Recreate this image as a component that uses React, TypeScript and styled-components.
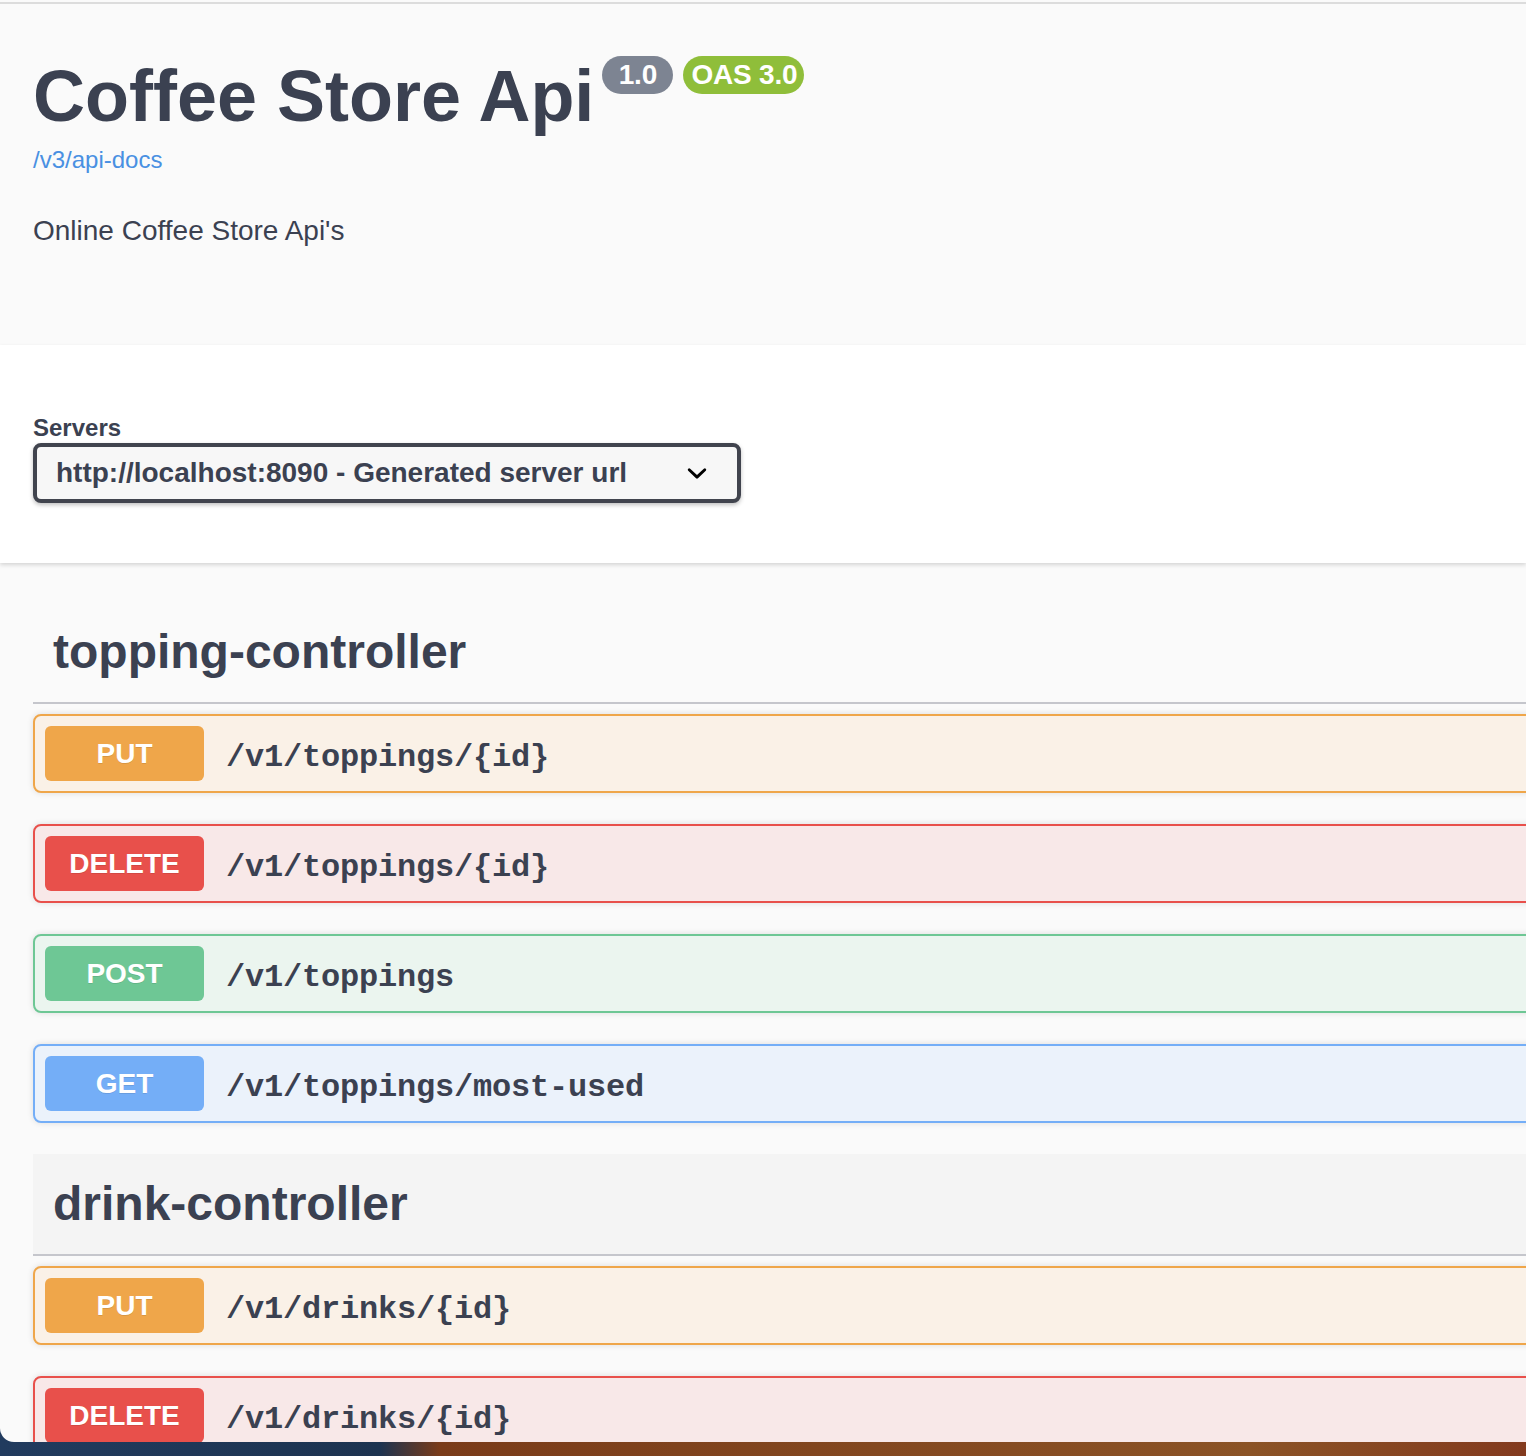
import React from "react";
import styled, { createGlobalStyle } from "styled-components";

const GlobalStyle = createGlobalStyle`
    html, body {
        margin: 0;
        padding: 0;
    }

    body {
        width: 1526px;
        height: 1456px;
        overflow: hidden;
        font-family: "Liberation Sans", Arial, sans-serif;
        color: #3b4151;
        background: linear-gradient(
            to right,
            #213b5e 0px,
            #1d3350 380px,
            #7a3b19 440px,
            #8b5326 1250px,
            #833a1e 1526px
        );
    }
`;

const Window = styled.div`
    height: 1442px;
    overflow: hidden;
    background: #fafafa;
    border-bottom-left-radius: 14px;
    padding-top: 2px;
    box-sizing: border-box;
`;

const TopRule = styled.div`
    height: 2px;
    background: #dcdcdc;
`;

const Wrapper = styled.div`
    width: 1640px;
    padding-left: 33px;
    box-sizing: border-box;
`;

const InfoSection = styled.section`
    padding: 52px 0 100px;
`;

const TitleRow = styled.div`
    display: flex;
    align-items: flex-start;
`;

const Title = styled.h1`
    margin: 4px 8px 0 0;
    font-size: 72px;
    line-height: 72px;
    font-weight: bold;
    color: #3b4151;
`;

const Badge = styled.span<{ $bg: string; $width?: number }>`
    display: inline-flex;
    align-items: center;
    justify-content: center;
    height: 38px;
    width: ${(p) => (p.$width ? `${p.$width}px` : "auto")};
    padding: ${(p) => (p.$width ? "0" : "0 7px 0 8px")};
    margin-right: 10px;
    border-radius: 19px;
    background: ${(p) => p.$bg};
    color: #ffffff;
    font-size: 28px;
    font-weight: bold;
    letter-spacing: -0.2px;
    box-sizing: border-box;
`;

const DocsLink = styled.a`
    display: block;
    margin-top: 16px;
    font-size: 24px;
    line-height: 24px;
    color: #4990e2;
    text-decoration: none;
`;

const Description = styled.p`
    margin: 45px 0 0;
    font-size: 28px;
    line-height: 28px;
    color: #3b4151;
`;

const SchemeContainer = styled.section`
    background: #ffffff;
    box-shadow: 0 2px 4px 0 rgba(0, 0, 0, 0.15);
    padding: 71px 0 60px;
    position: relative;
`;

const SchemeInner = styled.div`
    padding-left: 33px;
`;

const ServersLabel = styled.div`
    font-size: 24px;
    line-height: 24px;
    font-weight: bold;
    color: #3b4151;
    margin-bottom: 3px;
`;

const ServerSelect = styled.div`
    display: flex;
    align-items: center;
    justify-content: space-between;
    width: 708px;
    height: 60px;
    box-sizing: border-box;
    border: 4px solid #41444e;
    border-radius: 8px;
    background: #f7f7f7;
    box-shadow: 0 2px 4px 0 rgba(0, 0, 0, 0.25);
    padding: 0 20px 0 19px;
    font-size: 28px;
    line-height: 28px;
    font-weight: bold;
    color: #3b4151;

    svg {
        width: 40px;
        height: 40px;
        flex-shrink: 0;
    }
`;

const TagSection = styled.section`
    margin-bottom: 0;
`;

const TagHeading = styled.h3<{ $hover?: boolean }>`
    margin: 0 0 10px;
    padding: 20px 40px 20px 20px;
    font-size: 48px;
    line-height: 60px;
    font-weight: bold;
    color: #3b4151;
    background: ${(p) => (p.$hover ? "#f4f4f4" : "transparent")};
    border-bottom: 2px solid #c5c6cc;
`;

const Sections = styled.div`
    padding-top: 39px;
`;

const methodColors: Record<string, { main: string; bg: string }> = {
    PUT: { main: "#efa64a", bg: "#faf1e7" },
    DELETE: { main: "#e8504b", bg: "#f8e8e8" },
    POST: { main: "#6ec795", bg: "#ebf5ef" },
    GET: { main: "#74aef7", bg: "#ebf2fb" },
};

const OpBlock = styled.div<{ $method: string }>`
    display: flex;
    align-items: center;
    gap: 22px;
    height: 79px;
    box-sizing: border-box;
    padding: 0 10px;
    margin-bottom: 31px;
    border: 2px solid ${(p) => methodColors[p.$method].main};
    border-radius: 8px;
    background: ${(p) => methodColors[p.$method].bg};
    box-shadow: 0 0 6px rgba(0, 0, 0, 0.12);
`;

const MethodBadge = styled.span<{ $method: string }>`
    display: flex;
    align-items: center;
    justify-content: center;
    width: 159px;
    height: 55px;
    border-radius: 6px;
    background: ${(p) => methodColors[p.$method].main};
    color: #ffffff;
    font-size: 28px;
    font-weight: bold;
    text-shadow: 0 1px 0 rgba(0, 0, 0, 0.1);
`;

const OpPath = styled.span`
    font-family: "Liberation Mono", "Courier New", monospace;
    font-size: 32px;
    font-weight: bold;
    color: #3b4151;
    padding-top: 7px;
    letter-spacing: -0.2px;
`;

const ChevronDown = () => (
    <svg viewBox="0 0 20 20">
        <path
            fill="#000"
            d="M13.418 7.859a.695.695 0 01.978 0 .68.68 0 010 .969l-3.908 3.83a.697.697 0 01-.979 0l-3.908-3.83a.68.68 0 010-.969.695.695 0 01.978 0L10 11l3.418-3.141z"
        />
    </svg>
);

interface Operation {
    method: string;
    path: string;
}

const tags: { name: string; hover?: boolean; ops: Operation[] }[] = [
    {
        name: "topping-controller",
        ops: [
            { method: "PUT", path: "/v1/toppings/{id}" },
            { method: "DELETE", path: "/v1/toppings/{id}" },
            { method: "POST", path: "/v1/toppings" },
            { method: "GET", path: "/v1/toppings/most-used" },
        ],
    },
    {
        name: "drink-controller",
        hover: true,
        ops: [
            { method: "PUT", path: "/v1/drinks/{id}" },
            { method: "DELETE", path: "/v1/drinks/{id}" },
        ],
    },
];

const App = () => {
    return (
        <>
            <GlobalStyle />
            <Window>
                <TopRule />
                <Wrapper>
                    <InfoSection>
                        <TitleRow>
                            <Title>Coffee Store Api</Title>
                            <Badge $bg="#7d8492" $width={71}>
                                1.0
                            </Badge>
                            <Badge $bg="#8fbe3a">OAS 3.0</Badge>
                        </TitleRow>
                        <DocsLink href="#">/v3/api-docs</DocsLink>
                        <Description>Online Coffee Store Api's</Description>
                    </InfoSection>
                </Wrapper>
                <SchemeContainer>
                    <SchemeInner>
                        <ServersLabel>Servers</ServersLabel>
                        <ServerSelect>
                            <span>http://localhost:8090 - Generated server url</span>
                            <ChevronDown />
                        </ServerSelect>
                    </SchemeInner>
                </SchemeContainer>
                <Wrapper>
                    <Sections>
                        {tags.map((tag) => (
                            <TagSection key={tag.name}>
                                <TagHeading $hover={tag.hover}>{tag.name}</TagHeading>
                                {tag.ops.map((op, i) => (
                                    <OpBlock key={i} $method={op.method}>
                                        <MethodBadge $method={op.method}>
                                            {op.method}
                                        </MethodBadge>
                                        <OpPath>{op.path}</OpPath>
                                    </OpBlock>
                                ))}
                            </TagSection>
                        ))}
                    </Sections>
                </Wrapper>
            </Window>
        </>
    );
};

export default App;
